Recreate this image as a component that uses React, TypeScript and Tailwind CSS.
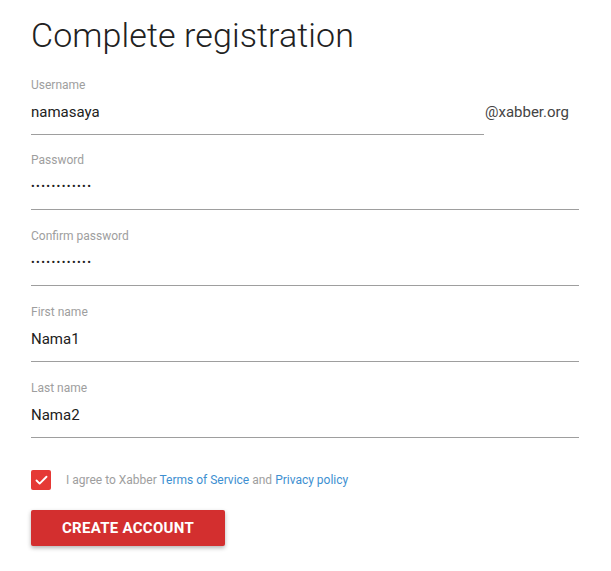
import { Check } from 'lucide-react'

const FONT = "font-['Roboto','Liberation_Sans',sans-serif]"

type Field = { label: string; value: string; dots?: boolean; suffix?: string }

const FIELDS: Field[] = [
  { label: 'Username', value: 'namasaya', suffix: '@xabber.org' },
  { label: 'Password', value: '••••••••••••', dots: true },
  { label: 'Confirm password', value: '••••••••••••', dots: true },
  { label: 'First name', value: 'Nama1' },
  { label: 'Last name', value: 'Nama2' },
]

export default function App() {
  return (
    <div className={`${FONT} bg-white min-h-[571px] w-[611px] pl-[31px] pr-[32px] pt-[15px]`}>
      <h1 className="text-[34px] leading-[40px] font-light text-[#212121] tracking-[0.1px]">
        Complete registration
      </h1>

      <div className="mt-[22px] flex flex-col">
        {FIELDS.map((f, i) => (
          <FieldRow key={f.label} field={f} className={i === 0 ? '' : i === 1 ? 'mt-[17px]' : 'mt-[18px]'} />
        ))}
      </div>

      {/* Terms */}
      <div className="mt-[32px] flex items-center gap-[15px]">
        <span className="w-5 h-5 rounded-[2px] bg-[#e53935] flex items-center justify-center">
          <Check size={15} strokeWidth={3} className="text-white" />
        </span>
        <span className="text-[12px] text-[#9e9e9e]">
          I agree to Xabber <span className="text-[#3d8fd1]">Terms of Service</span> and{' '}
          <span className="text-[#3d8fd1]">Privacy policy</span>
        </span>
      </div>

      <button className="mt-[20px] w-[194px] h-[36px] rounded-[2px] bg-[#d32f2f] text-white text-[15px] font-bold tracking-[0.3px] shadow-[0_2px_4px_rgba(0,0,0,0.3)]">
        CREATE ACCOUNT
      </button>
    </div>
  )
}

function FieldRow({ field: f, className }: { field: Field; className: string }) {
  return (
    <div className={`flex items-end ${className}`}>
      <div className="flex-1 border-b border-[#9e9e9e]">
        <div className="text-[12px] leading-4 text-[#9e9e9e]">{f.label}</div>
        <div
          className={`mt-[7px] pb-[10px] h-[34px] leading-6 text-[#212121] ${
            f.dots ? 'text-[11px] tracking-[1.4px]' : 'text-[15px]'
          }`}
        >
          {f.value}
        </div>
      </div>
      {f.suffix && (
        <div className="w-[95px] pl-[1px] pb-[11px] text-[15px] leading-6 text-[#444]">{f.suffix}</div>
      )}
    </div>
  )
}
